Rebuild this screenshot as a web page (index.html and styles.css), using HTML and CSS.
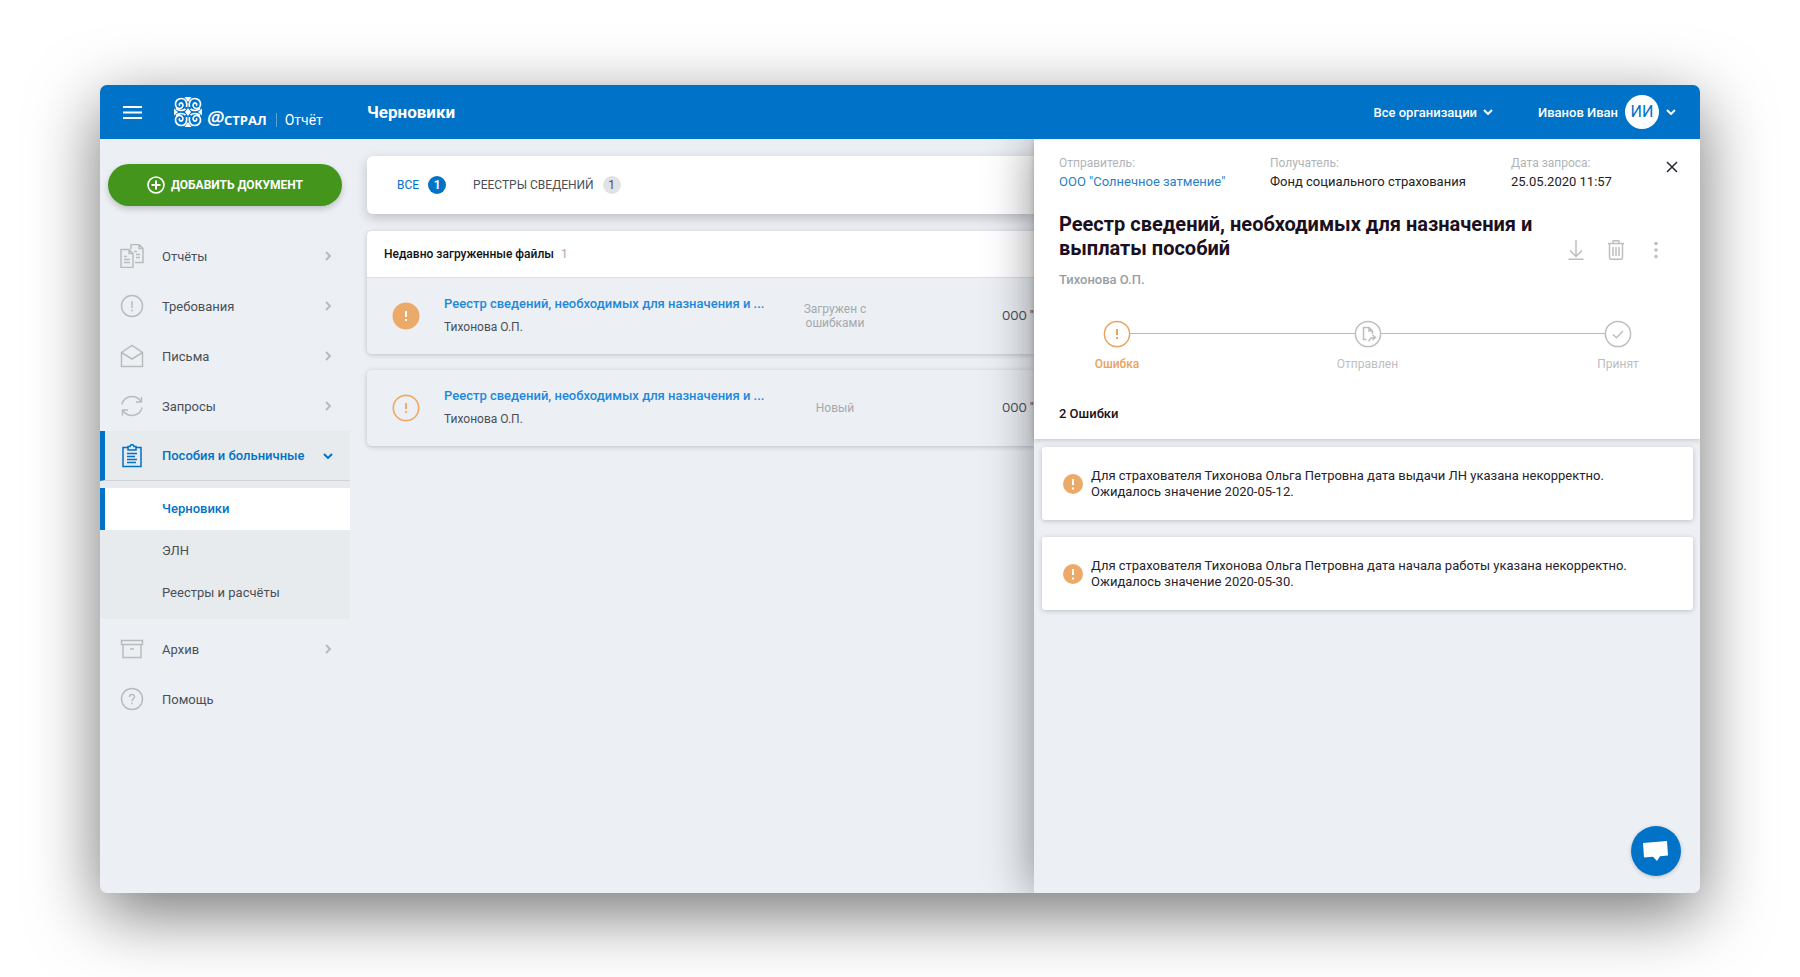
FILE: index.html
```
<!DOCTYPE html>
<html lang="ru">
<head>
    <meta charset="UTF-8">
    <meta name="viewport" content="width=device-width, initial-scale=1.0">
    <title>Астрал Отчёт - Черновики</title>
    <link rel="stylesheet" href="styles.css">
</head>
<body>
    <div class="app">
        <header class="topbar">
            <button type="button" class="burger" aria-label="Меню">
                <svg width="19" height="13" viewBox="0 0 19 13"><path d="M0 1h19M0 6.5h19M0 12h19" stroke="#fff" stroke-width="2"/></svg>
            </button>
            <a href="#" class="logo">
                <svg class="logo-mark" width="28" height="30" viewBox="0 0 28 30" fill="none" stroke="#fff" stroke-width="1.7">
                    <g id="curl">
                        <path d="M12.500 10C13.500 5 11.500 1.500 7.500 1.500C3.500 1.500 1 4.500 1.500 8C2 11.500 6 12.500 8 10.500C10 8.500 8.500 5.500 6.500 6C5 6.500 5 8 6 8.500"/>
                        <path d="M2 11.500C5 14 9 14 11.500 12"/>
                    </g>
                    <use href="#curl" transform="translate(28 0) scale(-1 1)"/>
                    <use href="#curl" transform="translate(0 30) scale(1 -1)"/>
                    <use href="#curl" transform="translate(28 30) scale(-1 -1)"/>
                    <path d="M14 11l3 4-3 4-3-4zM10.500 0h7L14 5zM10.500 30h7L14 25zM0 11.500v7L4 15zM28 11.500v7L24 15z" fill="#fff" stroke="none"/>
                </svg>
                <span class="logo-name"><i>@</i>СТРАЛ</span>
                <span class="logo-product">Отчёт</span>
            </a>
            <h1>Черновики</h1>
            <button type="button" class="top-button orgs">Все организации
                <svg width="10" height="6" viewBox="0 0 10 6"><path d="M1 1l4 4 4-4"/></svg>
            </button>
            <button type="button" class="top-button user">Иванов Иван
                <span class="avatar">ИИ</span>
                <svg width="10" height="6" viewBox="0 0 10 6"><path d="M1 1l4 4 4-4"/></svg>
            </button>
        </header>

        <div class="body">
            <aside class="sidebar">
                <button type="button" class="add-button">
                    <svg width="18" height="18" viewBox="0 0 18 18" fill="none" stroke="#fff" stroke-width="1.6"><circle cx="9" cy="9" r="8"/><path d="M9 4.500v9M4.500 9h9" stroke-width="2"/></svg>
                    ДОБАВИТЬ ДОКУМЕНТ
                </button>
                <nav class="menu">
                    <a href="#" class="menu-item">
                        <svg class="icon" width="24" height="24" viewBox="0 0 24 24"><path d="M1 5.500h8l4 4V23.500H1zM9 5.500v4h4M4 12.500h3M4 15.500h6M4 18.500h6M11 5V.500h8l4 4v14h-8M19 .500v4h4M14 7.500h3M16 10.500h4M16 13.500h4"/></svg>
                        <span>Отчёты</span>
                        <svg class="arrow" width="6" height="10" viewBox="0 0 6 10"><path d="M1 1l4 4-4 4"/></svg>
                    </a>
                    <a href="#" class="menu-item">
                        <svg class="icon" width="24" height="24" viewBox="0 0 24 24"><circle cx="12" cy="12" r="10.500"/><path d="M12 7v7M12 15.500v2"/></svg>
                        <span>Требования</span>
                        <svg class="arrow" width="6" height="10" viewBox="0 0 6 10"><path d="M1 1l4 4-4 4"/></svg>
                    </a>
                    <a href="#" class="menu-item">
                        <svg class="icon" width="24" height="24" viewBox="0 0 24 24"><path d="M1.500 8.500L12 1.500l10.500 7V22.500h-21zM1.500 8.500L12 15l10.500-6.500"/></svg>
                        <span>Письма</span>
                        <svg class="arrow" width="6" height="10" viewBox="0 0 6 10"><path d="M1 1l4 4-4 4"/></svg>
                    </a>
                    <a href="#" class="menu-item">
                        <svg class="icon" width="24" height="24" viewBox="0 0 24 24"><path d="M2 10.500C2.500 6 6.500 2.500 12 2.500c4 0 7 2 9 5M22 13.500c-.5 4.500-4.500 8-10 8-4 0-7-2-9-5M21.500 3v5h-5.500M2.500 21.500V16H8"/></svg>
                        <span>Запросы</span>
                        <svg class="arrow" width="6" height="10" viewBox="0 0 6 10"><path d="M1 1l4 4-4 4"/></svg>
                    </a>
                    <div class="menu-group">
                        <a href="#" class="menu-item active">
                            <svg class="icon" width="24" height="24" viewBox="0 0 24 24"><path d="M7.500 3.500H3v19h18v-19h-4.500M8 2.500h2c.5-2.500 3.500-2.500 4 0h2v3.500H8zM7 9.500h10M7 12.500h8M7 15.500h10M7 18.500h9"/></svg>
                            <span>Пособия и больничные</span>
                            <svg class="arrow" width="10" height="6" viewBox="0 0 10 6"><path d="M1 1l4 4 4-4"/></svg>
                        </a>
                        <div class="submenu">
                            <a href="#" class="current">Черновики</a>
                            <a href="#">ЭЛН</a>
                            <a href="#">Реестры и расчёты</a>
                        </div>
                    </div>
                    <a href="#" class="menu-item">
                        <svg class="icon" width="24" height="24" viewBox="0 0 24 24"><path d="M1.500 3.500h21v4h-21zM3 7.500v13h18v-13M10 12h4"/></svg>
                        <span>Архив</span>
                        <svg class="arrow" width="6" height="10" viewBox="0 0 6 10"><path d="M1 1l4 4-4 4"/></svg>
                    </a>
                    <a href="#" class="menu-item">
                        <svg class="icon" width="24" height="24" viewBox="0 0 24 24"><circle cx="12" cy="12" r="10.500"/><path d="M9.500 10c0-3.500 5-3.300 5-.3 0 2-2.500 2.100-2.500 4.300M12 15.500v1.800"/></svg>
                        <span>Помощь</span>
                    </a>
                </nav>
            </aside>

            <main class="content">
                <div class="tabs">
                    <button type="button" class="tab selected">ВСЕ <span class="count">1</span></button>
                    <button type="button" class="tab">РЕЕСТРЫ СВЕДЕНИЙ <span class="count">1</span></button>
                </div>

                <section class="files">
                    <h2>Недавно загруженные файлы <span>1</span></h2>
                    <div class="file-row">
                        <svg class="status-icon" width="28" height="28" viewBox="0 0 28 28"><circle cx="14" cy="14" r="13.500" fill="#ebaa69"/><path d="M14 9v6M14 17v2" stroke="#fff" stroke-width="2"/></svg>
                        <div class="file-name">
                            <a href="#">Реестр сведений, необходимых для назначения и ...</a>
                            <p>Тихонова О.П.</p>
                        </div>
                        <div class="file-status">Загружен с ошибками</div>
                        <div class="file-org">ООО "С</div>
                    </div>
                </section>

                <section class="files">
                    <div class="file-row">
                        <svg class="status-icon" width="28" height="28" viewBox="0 0 28 28"><circle cx="14" cy="14" r="12.700" fill="none" stroke="#ebaa69" stroke-width="1.700"/><path d="M14 9v6M14 17v2" stroke="#ebaa69" stroke-width="2"/></svg>
                        <div class="file-name">
                            <a href="#">Реестр сведений, необходимых для назначения и ...</a>
                            <p>Тихонова О.П.</p>
                        </div>
                        <div class="file-status">Новый</div>
                        <div class="file-org">ООО "С</div>
                    </div>
                </section>
            </main>

            <!-- Document drawer -->
            <section class="drawer">
                <div class="drawer-head">
                    <div class="meta">
                        <dl>
                            <div class="sender"><dt>Отправитель:</dt><dd><a href="#">ООО "Солнечное затмение"</a></dd></div>
                            <div class="receiver"><dt>Получатель:</dt><dd>Фонд социального страхования</dd></div>
                            <div><dt>Дата запроса:</dt><dd>25.05.2020 11:57</dd></div>
                        </dl>
                        <button type="button" class="close" aria-label="Закрыть">
                            <svg width="12" height="12" viewBox="0 0 12 12"><path d="M1 1l10 10M11 1L1 11" stroke="#2b2533" stroke-width="1.500"/></svg>
                        </button>
                    </div>

                    <div class="drawer-title">
                        <h2>Реестр сведений, необходимых для назначения и выплаты пособий</h2>
                        <div class="actions">
                            <button type="button" aria-label="Скачать">
                                <svg width="16" height="20" viewBox="0 0 16 20"><path d="M8 0v16M2 10.500l6 6 6-6M.5 19.300h15"/></svg>
                            </button>
                            <button type="button" aria-label="Удалить">
                                <svg width="16" height="20" viewBox="0 0 16 20"><path d="M0 3.500h16M1.500 3.500V17.500c0 1.200.6 1.800 1.800 1.800h9.400c1.200 0 1.800-.6 1.800-1.800V3.500M5 3V1.500c0-.6.3-.8.900-.8h4.200c.6 0 .9.200.9.800V3M5 7v9M8 7v9M11 7v9"/></svg>
                            </button>
                            <button type="button" aria-label="Ещё">
                                <svg width="16" height="20" viewBox="0 0 16 20" class="dots"><circle cx="8" cy="3.500" r="1.800"/><circle cx="8" cy="10" r="1.800"/><circle cx="8" cy="16.500" r="1.800"/></svg>
                            </button>
                        </div>
                    </div>
                    <p class="person">Тихонова О.П.</p>

                    <div class="steps">
                        <div class="step error">
                            <svg width="28" height="28" viewBox="0 0 28 28"><circle cx="14" cy="14" r="12.600"/><path d="M14 9v6M14 17v2" stroke-width="2"/></svg>
                            <span>Ошибка</span>
                        </div>
                        <div class="step-line"></div>
                        <div class="step">
                            <svg width="28" height="28" viewBox="0 0 28 28"><circle cx="14" cy="14" r="12.600"/><path d="M12.500 19.500H9.500v-12h5.500l3.500 3.500v3M15 7.500V11h3.500M15 21.500c0-2.800 1.500-4 6-4M18.500 15l3 2.500-3 2.500"/></svg>
                            <span>Отправлен</span>
                        </div>
                        <div class="step-line"></div>
                        <div class="step">
                            <svg width="28" height="28" viewBox="0 0 28 28"><circle cx="14" cy="14" r="12.600"/><path d="M9 14.500l3.500 3.300L19 11"/></svg>
                            <span>Принят</span>
                        </div>
                    </div>

                    <h3>2 Ошибки</h3>
                </div>

                <div class="error-card">
                    <svg width="20" height="20" viewBox="0 0 20 20"><circle cx="10" cy="10" r="10" fill="#ebaa69"/><path d="M10 5v6M10 13.500v2" stroke="#fff" stroke-width="2"/></svg>
                    <p>Для страхователя Тихонова Ольга Петровна дата выдачи ЛН указана некорректно.<br>Ожидалось значение 2020-05-12.</p>
                </div>
                <div class="error-card">
                    <svg width="20" height="20" viewBox="0 0 20 20"><circle cx="10" cy="10" r="10" fill="#ebaa69"/><path d="M10 5v6M10 13.500v2" stroke="#fff" stroke-width="2"/></svg>
                    <p>Для страхователя Тихонова Ольга Петровна дата начала работы указана некорректно.<br>Ожидалось значение 2020-05-30.</p>
                </div>

                <button type="button" class="chat" aria-label="Чат">
                    <svg width="26" height="22" viewBox="0 0 26 22"><path d="M0 3l24-2 1 14.500-8 .7L14 21l-4-4.300L1 17.500z" fill="#fff"/></svg>
                </button>
            </section>
        </div>
    </div>
</body>
</html>
```

FILE: styles.css
```
:root {
    --blue: #0072c8;
    --link: #1e88dc;
    --orange: #eaa35c;
    --bg: #ecf0f5;
    --muted: #a5a9ad;
    --icon: #b9bbbc;
}
* {
    box-sizing: border-box;
}
body {
    display: flex;
    min-height: 100vh;
    margin: 0;
    padding: 85px 100px 84px;
    background: #fff;
    font-family: Roboto, "Liberation Sans", sans-serif;
    font-size: 13px;
    color: #4a4f57;
}
h1, h2, h3, p, dl, dd {
    margin: 0;
}
a {
    color: inherit;
    text-decoration: none;
}
button {
    display: flex;
    align-items: center;
    padding: 0;
    border: none;
    background: none;
    font: inherit;
    color: inherit;
    cursor: pointer;
}
.app {
    display: flex;
    flex-direction: column;
    flex: 1;
    min-width: 0;
    background: var(--bg);
    border-radius: 7px;
    box-shadow: 0 20px 68px rgba(0,0,0,0.55);
    overflow: hidden;
}

/* Top bar */
.topbar {
    position: relative;
    z-index: 1;
    display: flex;
    align-items: center;
    height: 54px;
    padding: 0 24px 0 23px;
    background: var(--blue);
    color: #fff;
}
.burger {
    width: 51px;
    height: 54px;
}
.logo {
    display: flex;
    align-items: flex-end;
    width: 193px;
}
.logo-name {
    padding: 0 9px 0 5px;
    font-family: "Open Sans", sans-serif;
    font-size: 13px;
    line-height: 14px;
    font-weight: 700;
}
.logo-name i {
    font-size: 20px;
    font-weight: 600;
}
.logo-product {
    padding-left: 8px;
    border-left: 1px solid #5ba5de;
    font-size: 14px;
    line-height: 14px;
}
h1 {
    flex: 1;
    font-size: 17px;
    font-weight: 700;
}
.top-button {
    font-weight: 500;
}
.top-button svg {
    fill: none;
    stroke: #fff;
    stroke-width: 2;
}
.orgs {
    gap: 6px;
    margin-right: 45px;
}
.user {
    gap: 7px;
}
.avatar {
    width: 34px;
    height: 34px;
    border-radius: 50%;
    background: #fff;
    color: var(--blue);
    font-size: 16px;
    line-height: 34px;
    font-weight: 400;
}
.body {
    position: relative;
    display: flex;
    flex: 1;
}

/* Sidebar */
.sidebar {
    width: 250px;
    padding-top: 25px;
}
.add-button {
    justify-content: center;
    gap: 6px;
    width: 234px;
    height: 42px;
    margin: 0 8px 25px;
    border-radius: 21px;
    background: #43951b;
    box-shadow: 0 3px 6px rgba(0,0,0,0.2);
    color: #fff;
    font-size: 12px;
    font-weight: 700;
}
.menu-item {
    display: flex;
    align-items: center;
    height: 50px;
    padding: 0 19px 0 20px;
}
.menu-item span {
    flex: 1;
    padding-left: 18px;
}
.menu svg {
    fill: none;
    stroke: var(--icon);
    stroke-width: 1.5;
}
.menu .arrow {
    stroke-width: 2;
}
.menu-group {
    margin-bottom: 5px;
    background: #e7ebee;
}
.menu-item.active {
    border-left: 5px solid var(--blue);
    border-bottom: 1px solid #d0d4d8;
    padding: 0 17px 0 15px;
    color: var(--blue);
    font-weight: 500;
}
.menu-item.active svg {
    stroke: var(--blue);
}
.submenu {
    padding: 7px 0 5px;
}
.submenu a {
    display: block;
    padding-left: 62px;
    line-height: 42px;
}
.submenu .current {
    border-left: 5px solid var(--blue);
    padding-left: 57px;
    background: #fff;
    color: var(--blue);
    font-weight: 500;
}

/* Files list, ends where the drawer starts */
.content {
    flex: 1;
    min-width: 0;
    margin-right: 666px;
    padding: 17px 0 0 17px;
}
.tabs {
    display: flex;
    gap: 27px;
    height: 58px;
    margin-bottom: 17px;
    padding: 0 30px;
    background: #fff;
    border-radius: 6px 0 0 6px;
    box-shadow: 0 4px 12px rgba(0,0,0,0.2);
}
.tab {
    gap: 9px;
    font-size: 12px;
}
.tab.selected {
    color: var(--blue);
}
.count {
    width: 18px;
    height: 18px;
    border-radius: 50%;
    background: #e1e2e4;
    line-height: 18px;
    text-align: center;
}
.selected .count {
    background: var(--blue);
    color: #fff;
    font-weight: 700;
}
.files {
    margin-bottom: 16px;
    border-radius: 5px 0 0 5px;
    box-shadow: 0 1px 5px rgba(0,0,0,0.2);
    overflow: hidden;
}
.files h2 {
    height: 47px;
    padding-left: 17px;
    border-bottom: 1px solid #dcdfe2;
    background: #fff;
    color: #111;
    font-size: 12px;
    line-height: 46px;
    font-weight: 500;
}
.files h2 span {
    padding-left: 4px;
    color: var(--muted);
    font-weight: 400;
}
.file-row {
    display: grid;
    grid-template-columns: 77px 328px 126px minmax(0, 1fr);
    align-items: center;
    height: 76px;
    background: var(--bg);
}
.status-icon {
    justify-self: center;
}
.file-name a {
    color: var(--link);
    font-weight: 500;
    line-height: 22px;
    white-space: nowrap;
}
.file-name p {
    font-size: 12px;
    line-height: 24px;
}
.file-status {
    padding: 0 28px;
    color: var(--muted);
    font-size: 12px;
    text-align: center;
}
.file-org {
    padding-left: 104px;
    font-size: 12px;
    white-space: nowrap;
    overflow: hidden;
}

/* Drawer */
.drawer {
    position: absolute;
    top: 0;
    right: 0;
    bottom: 0;
    width: 666px;
    background: var(--bg);
    box-shadow: 0 0 45px rgba(0,0,0,0.45);
}
.drawer-head {
    margin-bottom: 8px;
    padding: 15px 22px 15px 25px;
    background: #fff;
    box-shadow: 0 1px 5px rgba(0,0,0,0.2);
}
.meta {
    display: flex;
    justify-content: space-between;
}
dl {
    display: flex;
}
.sender {
    width: 211px;
}
.receiver {
    width: 241px;
}
dt {
    color: #b0b4b8;
    font-size: 12px;
    line-height: 18px;
}
dd {
    color: #222;
    line-height: 20px;
}
dd a {
    color: #2a7fc9;
}
.close {
    height: 26px;
}
.close svg {
    fill: none;
}
.drawer-title {
    display: flex;
    align-items: flex-end;
    justify-content: space-between;
    margin-top: 20px;
}
.drawer-title h2 {
    width: 500px;
    color: #1a1020;
    font-size: 20px;
    line-height: 24px;
    font-weight: 700;
}
.actions {
    display: flex;
    gap: 24px;
    padding-right: 14px;
}
.actions svg {
    fill: none;
    stroke: #bcbebf;
    stroke-width: 1.5;
}
.actions .dots {
    fill: #bcbebf;
    stroke: none;
}
.person {
    margin-top: 10px;
    color: #999ea3;
    line-height: 20px;
    font-weight: 500;
}
.steps {
    display: flex;
    margin: 30px 20px 32px 18px;
}
.step {
    display: flex;
    flex-direction: column;
    align-items: center;
    gap: 8px;
    width: 80px;
    color: #bcbebf;
    font-size: 12px;
    line-height: 16px;
}
.step svg {
    fill: none;
    stroke: currentColor;
    stroke-width: 1.5;
}
.step.error {
    color: var(--orange);
    font-weight: 500;
}
.step-line {
    flex: 1;
    height: 1px;
    margin: 13px -27px 0;
    background: #b4bbc0;
}
h3 {
    color: #1a1020;
    font-size: 13px;
    line-height: 20px;
    font-weight: 500;
}
.error-card {
    display: flex;
    align-items: center;
    gap: 8px;
    height: 73px;
    margin: 0 7px 17px 8px;
    padding: 0 21px;
    background: #fff;
    border-radius: 3px;
    box-shadow: 0 1px 5px rgba(0,0,0,0.2);
    color: #25232c;
    line-height: 16px;
}
.chat {
    position: absolute;
    right: 19px;
    bottom: 17px;
    justify-content: center;
    width: 50px;
    height: 50px;
    border-radius: 50%;
    background: var(--blue);
    box-shadow: 0 1px 4px rgba(0,0,0,0.2);
}
```
